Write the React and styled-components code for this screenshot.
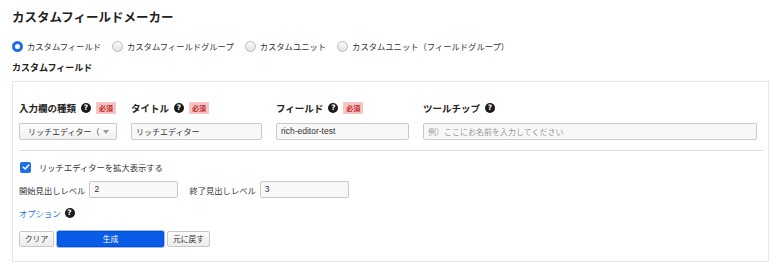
import React from "react";
import styled, { createGlobalStyle } from "styled-components";

const Global = createGlobalStyle`
  html, body { margin: 0; padding: 0; background: #fff; }
  body {
    font-family: "Noto Sans CJK JP", "Noto Sans", "Liberation Sans", sans-serif;
    color: #222;
    font-size: 8px;
  }
  * { box-sizing: border-box; }
`;

const Page = styled.div`
  padding: 8px 12px 0 12px;
  width: 780px;
`;

const Title = styled.h1`
  margin: 0;
  font-size: 12.5px;
  font-weight: 700;
  line-height: 18px;
  color: #222;
  white-space: nowrap;
`;

const RadioRow = styled.div`
  display: flex;
  align-items: center;
  gap: 11px;
  margin-top: 14px;
  height: 12px;
`;

const RadioItem = styled.label`
  display: flex;
  align-items: center;
  gap: 4px;
  font-size: 8.3px;
  color: #333;
  white-space: nowrap;
`;

const RadioDot = styled.span`
  width: 11px;
  height: 11px;
  border-radius: 50%;
  display: inline-block;
  flex: none;
  ${(p) =>
    p.$checked
      ? `background: #fff; border: 3px solid #1f6fe5;`
      : `background: linear-gradient(#fcfcfc, #e0e0e0); border: 1px solid #b8b8b8;`}
`;

const SectionLabel = styled.div`
  font-size: 9px;
  font-weight: 700;
  margin-top: 10px;
  line-height: 12px;
  white-space: nowrap;
`;

const Panel = styled.div`
  margin-top: 7px;
  width: 757px;
  border: 1px solid #e6e6e6;
  padding: 20px 5px 14px 6px;
  background: #fff;
`;

const FieldRow = styled.div`
  display: flex;
  gap: 14px;
`;

const FieldCol = styled.div`
  width: ${(p) => p.$w}px;
  display: flex;
  flex-direction: column;
  gap: 9px;
`;

const LabelLine = styled.div`
  display: flex;
  align-items: center;
  height: 12px;
  white-space: nowrap;
`;

const LabelText = styled.span`
  font-size: 9.5px;
  font-weight: 700;
  color: #222;
  margin-right: 5px;
`;

const Help = styled.span`
  width: 10px;
  height: 10px;
  border-radius: 50%;
  background: #1a1a1a;
  color: #fff;
  font-size: 7.5px;
  font-weight: 700;
  line-height: 10px;
  text-align: center;
  font-family: "DejaVu Sans", sans-serif;
  display: inline-block;
  flex: none;
  margin-right: ${(p) => p.$mr || 0}px;
`;

const Badge = styled.span`
  background: #f6c4c4;
  color: #c0282a;
  font-size: 7px;
  font-weight: 700;
  padding: 0 3px;
  line-height: 12px;
  border-radius: 1px;
`;

const Input = styled.div`
  height: 17px;
  width: ${(p) => (p.$w ? `${p.$w}px` : "100%")};
  flex: none;
  border: 1px solid #c9c9c9;
  border-radius: 2px;
  background: #f8f8f8;
  font-size: 8px;
  line-height: 15px;
  padding: 0 4px;
  color: ${(p) => (p.$placeholder ? "#999" : "#333")};
  white-space: nowrap;
  overflow: hidden;
  font-family: ${(p) =>
    p.$latin
      ? `"Liberation Sans", "Noto Sans CJK JP", sans-serif`
      : `"Noto Sans CJK JP", sans-serif`};
  ${(p) => (p.$latin ? "font-size: 8.5px;" : "")}
`;

const Select = styled.div`
  height: 17px;
  width: 100%;
  border: 1px solid #c9c9c9;
  border-radius: 2px;
  background: linear-gradient(#fdfdfd, #f1f1f1);
  font-size: 8px;
  line-height: 15px;
  padding: 0 7px 0 8px;
  color: #333;
  display: flex;
  justify-content: space-between;
  align-items: center;
  white-space: nowrap;
`;

const Caret = styled.span`
  width: 0;
  height: 0;
  border-left: 3px solid transparent;
  border-right: 3px solid transparent;
  border-top: 4px solid #999;
`;

const Divider = styled.hr`
  border: none;
  border-top: 1px solid #dedede;
  margin: 10px 0 0 0;
`;

const CheckRow = styled.label`
  display: flex;
  align-items: center;
  gap: 8px;
  margin-top: 10px;
  height: 12px;
  font-size: 8.3px;
  color: #333;
  white-space: nowrap;
`;

const CheckBox = styled.span`
  width: 11px;
  height: 11px;
  border-radius: 2px;
  background: #1f6fe5;
  display: inline-flex;
  align-items: center;
  justify-content: center;
  margin-left: 1px;
`;

const LevelRow = styled.div`
  display: flex;
  align-items: center;
  margin-top: 8px;
  gap: 4px;
  white-space: nowrap;
`;

const LevelLabel = styled.span`
  font-size: 8.3px;
  color: #333;
  margin-left: ${(p) => p.$ml || 0}px;
`;

const OptionRow = styled.div`
  display: flex;
  align-items: center;
  gap: 4px;
  margin-top: 9px;
  height: 12px;
`;

const OptionLink = styled.a`
  color: #1e6fd9;
  font-size: 8.3px;
  text-decoration: none;
`;

const ButtonRow = styled.div`
  display: flex;
  gap: 3px;
  margin-top: 12px;
`;

const Button = styled.button`
  height: 16px;
  width: ${(p) => p.$w}px;
  font-family: "Noto Sans CJK JP", sans-serif;
  font-size: 7.8px;
  line-height: 14px;
  padding: 0;
  border-radius: 2px;
  ${(p) =>
    p.$primary
      ? `background: #0a5be6; border: 1px solid #0a4fd0; color: #fff; box-shadow: 0 0 0 1px #9dbdf2;`
      : `background: linear-gradient(#fbfbfb, #ececec); border: 1px solid #c8c8c8; color: #333;`}
`;

export default function App() {
  return (
    <>
      <Global />
      <Page>
        <Title>カスタムフィールドメーカー</Title>
        <RadioRow>
          <RadioItem>
            <RadioDot $checked />
            カスタムフィールド
          </RadioItem>
          <RadioItem>
            <RadioDot />
            カスタムフィールドグループ
          </RadioItem>
          <RadioItem>
            <RadioDot />
            カスタムユニット
          </RadioItem>
          <RadioItem>
            <RadioDot />
            カスタムユニット（フィールドグループ）
          </RadioItem>
        </RadioRow>
        <SectionLabel>カスタムフィールド</SectionLabel>
        <Panel>
          <FieldRow>
            <FieldCol $w={98}>
              <LabelLine>
                <LabelText>入力欄の種類</LabelText>
                <Help $mr={5}>?</Help>
                <Badge>必須</Badge>
              </LabelLine>
              <Select>
                <span>リッチエディター（</span>
                <Caret />
              </Select>
            </FieldCol>
            <FieldCol $w={131}>
              <LabelLine>
                <LabelText>タイトル</LabelText>
                <Help $mr={5}>?</Help>
                <Badge>必須</Badge>
              </LabelLine>
              <Input>リッチエディター</Input>
            </FieldCol>
            <FieldCol $w={133}>
              <LabelLine>
                <LabelText>フィールド</LabelText>
                <Help $mr={5}>?</Help>
                <Badge>必須</Badge>
              </LabelLine>
              <Input $latin>rich-editor-test</Input>
            </FieldCol>
            <FieldCol $w={334}>
              <LabelLine>
                <LabelText>ツールチップ</LabelText>
                <Help>?</Help>
              </LabelLine>
              <Input $placeholder>例）ここにお名前を入力してください</Input>
            </FieldCol>
          </FieldRow>
          <Divider />
          <CheckRow>
            <CheckBox>
              <svg width="8" height="8" viewBox="0 0 8 8">
                <path d="M1.3 4.2 L3.2 6 L6.8 2" stroke="#fff" strokeWidth="1.5" fill="none" strokeLinecap="round" strokeLinejoin="round" />
              </svg>
            </CheckBox>
            リッチエディターを拡大表示する
          </CheckRow>
          <LevelRow>
            <LevelLabel>開始見出しレベル</LevelLabel>
            <Input $w={89} $latin>2</Input>
            <LevelLabel $ml={7}>終了見出しレベル</LevelLabel>
            <Input $w={89} $latin>3</Input>
          </LevelRow>
          <OptionRow>
            <OptionLink href="#">オプション</OptionLink>
            <Help>?</Help>
          </OptionRow>
          <ButtonRow>
            <Button $w={35}>クリア</Button>
            <Button $w={107} $primary>生成</Button>
            <Button $w={43}>元に戻す</Button>
          </ButtonRow>
        </Panel>
      </Page>
    </>
  );
}
